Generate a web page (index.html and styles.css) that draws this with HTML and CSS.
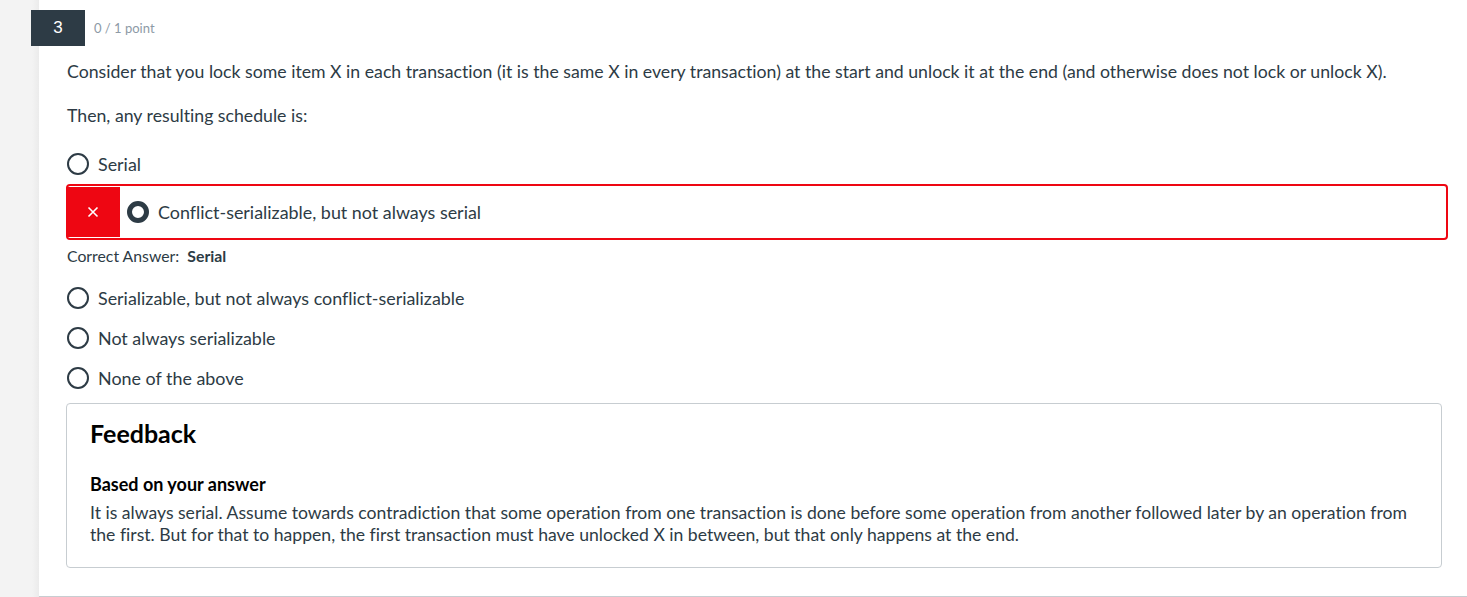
FILE: index.html
```html
<!DOCTYPE html>
<html>
<head>
<meta charset="utf-8">
<link rel="stylesheet" href="styles.css">
</head>
<body>
<div class="page">
  <div class="gutter"></div>
  <main class="main">
    <div class="q-header">
      <div class="q-num">3</div>
      <div class="q-points">0 / 1 point</div>
    </div>
    <p class="q-text">Consider that you lock some item X in each transaction (it is the same X in every transaction) at the start and unlock it at the end (and otherwise does not lock or unlock X).</p>
    <p class="q-text q-text-2">Then, any resulting schedule is:</p>
    <div class="answers">
      <div class="option">
        <span class="radio"></span><span class="label">Serial</span>
      </div>
      <div class="option wrong">
        <span class="wrong-flag">
          <svg width="12" height="12" viewBox="0 0 12 12"><path d="M1.5 1.5 L10.5 10.5 M10.5 1.5 L1.5 10.5" stroke="#fff" stroke-width="1.6" fill="none"/></svg>
        </span>
        <span class="radio checked"></span><span class="label">Conflict-serializable, but not always serial</span>
      </div>
      <div class="correct-answer">Correct Answer:&nbsp; <strong>Serial</strong></div>
      <div class="option first-after">
        <span class="radio"></span><span class="label">Serializable, but not always conflict-serializable</span>
      </div>
      <div class="option">
        <span class="radio"></span><span class="label">Not always serializable</span>
      </div>
      <div class="option">
        <span class="radio"></span><span class="label">None of the above</span>
      </div>
    </div>
    <section class="feedback">
      <h3 class="fb-title">Feedback</h3>
      <h4 class="fb-sub">Based on your answer</h4>
      <p class="fb-text">It is always serial. Assume towards contradiction that some operation from one transaction is done before some operation from another followed later by an operation from the first. But for that to happen, the first transaction must have unlocked X in between, but that only happens at the end.</p>
    </section>
  </main>
</div>
</body>
</html>
```

FILE: styles.css
```css
* { box-sizing: border-box; }
html, body {
  margin: 0;
  padding: 0;
  background: #ffffff;
}
body {
  font-family: Lato, "Open Sans", sans-serif;
  color: #2d3b45;
  font-size: 16px;
  font-variant-ligatures: none;
}
.page {
  display: flex;
  height: 597px;
  overflow: hidden;
}
.gutter {
  width: 39px;
  flex: none;
  background: linear-gradient(to right, #f3f3f3 0, #f3f3f3 32px, #ebebeb 39px);
}
.main {
  flex: 1;
  height: 597px;
  border-bottom: 1px solid #c7cdd1;
  padding: 0 19px 0 27px;
}
.q-header {
  display: flex;
  align-items: center;
  margin-top: 10px;
  margin-left: -35px;
  height: 36px;
}
.q-num {
  width: 54px;
  height: 36px;
  background: #2d3b45;
  color: #ffffff;
  font-family: "Liberation Sans", Arial, sans-serif;
  font-size: 17px;
  display: flex;
  align-items: center;
  justify-content: center;
}
.q-points {
  margin-left: 9px;
  font-size: 13px;
  color: #8d9aa6;
}
.q-text {
  margin: 14px 0 0 0;
  font-size: 17.7px;
  line-height: 24px;
  padding-left: 1px;
}
.q-text-2 {
  margin-top: 20px;
}
.answers {
  margin-top: 16px;
}
.option {
  display: flex;
  align-items: center;
  height: 40px;
  padding-left: 1px;
}
.radio {
  width: 22px;
  height: 22px;
  border: 2px solid #2d3b45;
  border-radius: 50%;
  flex: none;
  background: #fff;
}
.radio.checked {
  border-width: 5.5px;
}
.label {
  margin-left: 9px;
  font-size: 17.9px;
  line-height: 22px;
}
.option.wrong {
  height: 56px;
  border: 2px solid #ee0612;
  border-radius: 4px;
  padding-left: 0;
  align-items: stretch;
}
.option.wrong .radio {
  align-self: center;
  margin-left: 7px;
}
.option.wrong .label {
  align-self: center;
}
.wrong-flag {
  width: 54px;
  background: #ee0612;
  display: flex;
  align-items: center;
  justify-content: center;
  flex: none;
  margin: 1px 0 1px -2px;
  border-radius: 2px 0 0 2px;
}
.correct-answer {
  margin-top: 6px;
  font-size: 15.8px;
  line-height: 20px;
  padding-left: 1px;
}
.correct-answer strong {
  font-weight: 700;
}
.first-after {
  margin-top: 12px;
}
.feedback {
  margin-top: 5px;
  margin-right: 6px;
  height: 165px;
  border: 1px solid #c7cdd1;
  border-radius: 4px;
  padding: 13px 12px 0 23px;
}
.fb-title {
  margin: 0;
  font-size: 25px;
  line-height: 32px;
  font-weight: 700;
  color: #000000;
}
.fb-sub {
  margin: 24px 0 0 0;
  font-size: 18px;
  line-height: 22px;
  font-weight: 700;
  color: #000000;
}
.fb-text {
  margin: 7px 0 0 0;
  font-size: 17.6px;
  line-height: 22px;
}
```
